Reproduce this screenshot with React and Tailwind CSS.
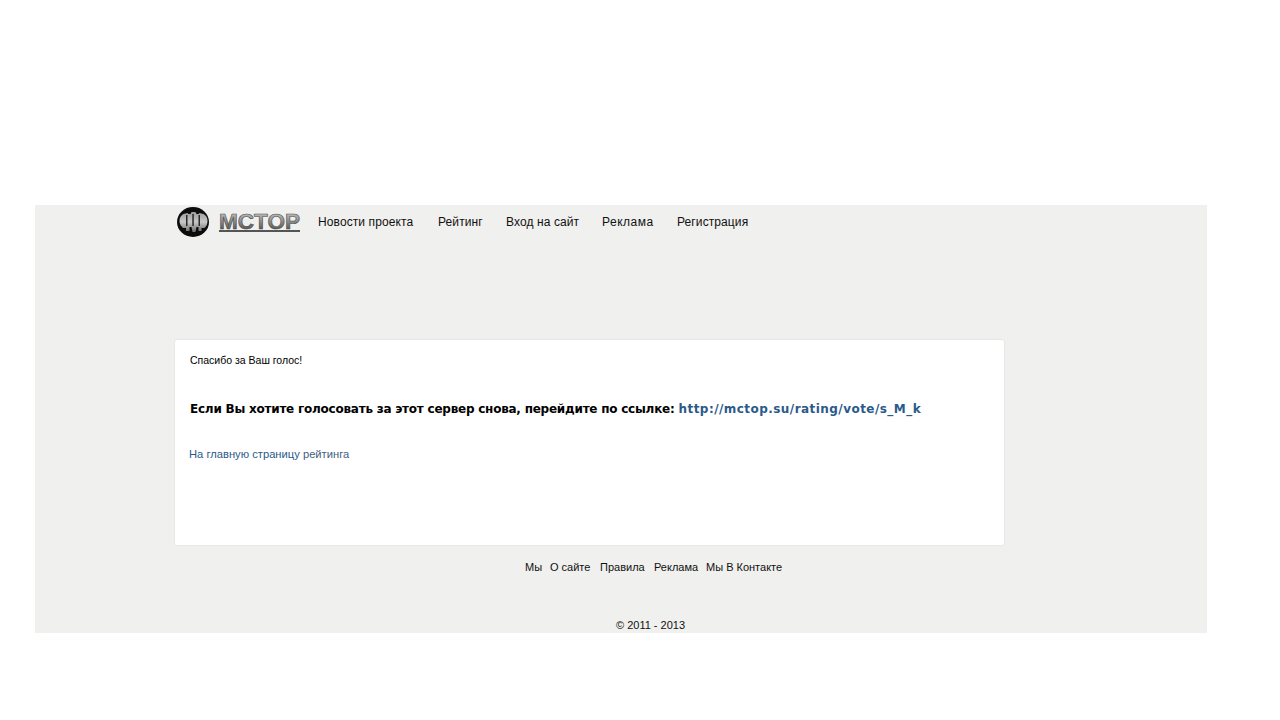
import React from 'react';

const font = { fontFamily: '"Liberation Sans", Arial, sans-serif' };

function Logo() {
  return (
    <div className="flex items-center">
      <svg width="34" height="32" viewBox="0 0 34 32" className="block">
        <defs>
          <linearGradient id="pillars" x1="0" y1="0" x2="0" y2="1">
            <stop offset="0" stopColor="#9a9a9a" />
            <stop offset="0.5" stopColor="#c8c8c8" />
            <stop offset="1" stopColor="#6a6a6a" />
          </linearGradient>
        </defs>
        <ellipse cx="17" cy="16" rx="16" ry="15" fill="#0c0c0c" />
        <path d="M3.5 15c0-4 2-6 4-7l4-1 1 1h2l1-2h4l1 2h2l1-1 4 1c2 1 4 3 4 7 0 3-1 5-3 7h-3v3h-3v-4h-2l-1 5h-3l-1-5h-2v4H10v-3H7c-2-2-3.500-4-3.500-7z" fill="url(#pillars)" />
        <path d="M10 9h1.500v11H10zM16.300 8h1.500v12h-1.500zM22.500 9H24v11h-1.500z" fill="#2a2a2a" />
      </svg>
      <svg width="84" height="24" viewBox="0 0 84 24" className="block ml-[8px] mt-[1px]">
        <defs>
          <linearGradient id="letters" x1="0" y1="0" x2="0" y2="1">
            <stop offset="0" stopColor="#d4d4d4" />
            <stop offset="0.5" stopColor="#8c8c8c" />
            <stop offset="1" stopColor="#3a3a3a" />
          </linearGradient>
        </defs>
        <text
          x="1"
          y="19"
          textLength="81"
          lengthAdjust="spacingAndGlyphs"
          fontFamily='"Liberation Sans", sans-serif'
          fontWeight="700"
          fontSize="22"
          fill="url(#letters)"
          stroke="#4a4a4a"
          strokeWidth="0.6"
        >
          MCTOP
        </text>
        <rect x="1" y="20" width="81" height="2" fill="#555555" />
      </svg>
    </div>
  );
}

export default function App() {
  const nav = [
    ['Новости проекта', 'w-[120px]'],
    ['Рейтинг', 'w-[68px]'],
    ['Вход на сайт', 'w-[96px]'],
    ['Реклама', 'w-[75px] tracking-[0.5px]'],
    ['Регистрация', ''],
  ];
  const foot = [
    ['Мы', 'w-[25px]'],
    ['О сайте', 'w-[50px]'],
    ['Правила', 'w-[54px]'],
    ['Реклама', 'w-[52px]'],
    ['Мы В Контакте', ''],
  ];

  return (
    <div className="min-h-[720px] bg-white pt-[205px] pl-[35px]" style={font}>
      <div className="w-[1172px] h-[428px] bg-[#f0f0ee] overflow-hidden">
        {/* шапка */}
        <div className="flex items-center h-[33px] pl-[141px]">
          <Logo />
          <nav className="flex ml-[16px] text-[12px] leading-[14px] tracking-[0.1px] text-[#111] mt-[1px]">
            {nav.map(([t, m]) => (
              <a key={t} className={m}>{t}</a>
            ))}
          </nav>
        </div>

        <div className="ml-[140px] mt-[102px] w-[829px] h-[205px] bg-white rounded-[2px] shadow-[0_0_2px_rgba(0,0,0,0.12)] pl-[15px] pt-[13px]">
          <p className="text-[10.5px] leading-[14px] text-black">Спасибо за Ваш голос!</p>
          <p
            className="mt-[34px] text-[12px] leading-[16px] font-bold text-black tracking-[-0.235px]"
            style={{ fontFamily: '"DejaVu Sans", sans-serif' }}
          >
            Если Вы хотите голосовать за этот сервер снова, перейдите по ссылке:{' '}
            <a className="text-[#2b5a8a] tracking-[0.45px]">http://mctop.su/rating/vote/s_M_k</a>
          </p>
          <p className="mt-[30px] -ml-[1px] text-[11.2px] leading-[14px] text-[#2b5a8a]">
            На главную страницу <span className="text-[#3f5f80]">рейтинга</span>
          </p>
        </div>

        <div className="flex ml-[490px] mt-[15px] text-[11px] leading-[14px] text-[#111]">
          {foot.map(([t, m]) => (
            <a key={t} className={m}>{t}</a>
          ))}
        </div>
        <p className="ml-[581px] mt-[44px] text-[11px] leading-[14px] text-[#111]">© 2011 - 2013</p>
      </div>
    </div>
  );
}
